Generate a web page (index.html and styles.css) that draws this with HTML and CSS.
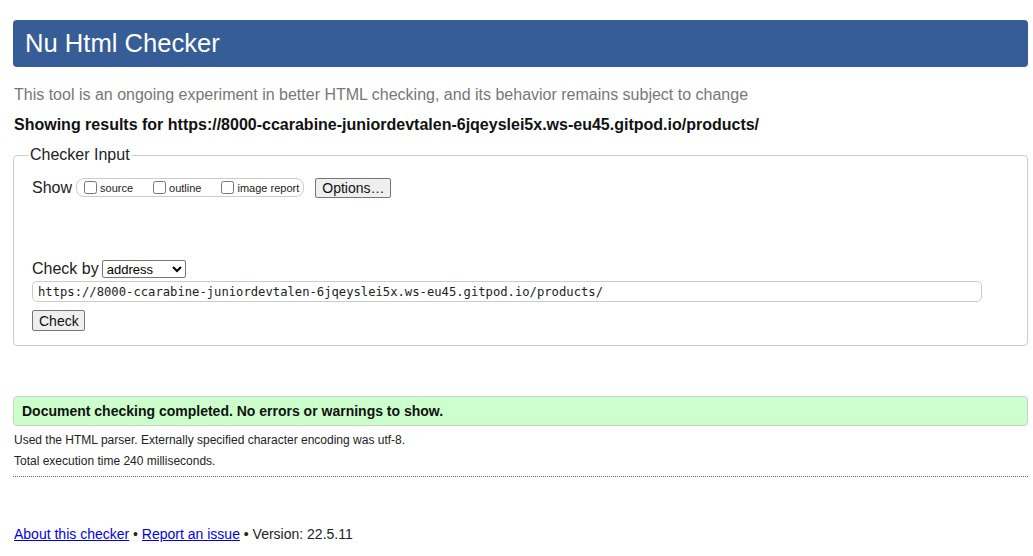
FILE: index.html
```html
<!DOCTYPE html>
<html lang="en">
<head>
<meta charset="utf-8">
<title>Nu Html Checker</title>
<link rel="stylesheet" href="styles.css">
</head>
<body>
<h1 class="title">Nu Html Checker</h1>
<p class="intro">This tool is an ongoing experiment in better HTML checking, and its behavior remains subject to change</p>
<p class="results-for">Showing results for https://8000-ccarabine-juniordevtalen-6jqeyslei5x.ws-eu45.gitpod.io/products/</p>
<form class="checker-form">
  <fieldset class="checker-input">
    <legend class="legend">Checker Input</legend>
    <div class="show-row">
      <span class="row-label">Show</span>
      <span class="opts-group">
        <label class="opt"><input type="checkbox" class="cb">source</label>
        <label class="opt"><input type="checkbox" class="cb">outline</label>
        <label class="opt"><input type="checkbox" class="cb">image report</label>
      </span>
      <button type="button" class="btn btn-options">Options…</button>
    </div>
    <div class="checkby-row">
      <span class="row-label">Check by</span>
      <select class="sel"><option>address</option></select>
    </div>
    <div class="url-row">
      <input class="url" type="text" value="https://8000-ccarabine-juniordevtalen-6jqeyslei5x.ws-eu45.gitpod.io/products/">
    </div>
    <div class="submit-row">
      <button type="button" class="btn btn-check">Check</button>
    </div>
  </fieldset>
</form>
<p class="success">Document checking completed. No errors or warnings to show.</p>
<p class="details">Used the HTML parser. Externally specified character encoding was utf-8.</p>
<p class="details">Total execution time 240 milliseconds.</p>
<hr class="sep">
<p class="footer"><a href="#" class="flink">About this checker</a> • <a href="#" class="flink">Report an issue</a> • Version: 22.5.11</p>
</body>
</html>
```
FILE: styles.css
```css
html { background: #fff; }
body {
  margin: 0;
  padding: 20px 5px 0 13px;
  font-family: "Liberation Sans", Arial, sans-serif;
  color: #222;
}
.title {
  margin: 0;
  height: 47px;
  box-sizing: border-box;
  padding: 7px 12px 0;
  background: #365d95;
  color: #fff;
  font-weight: normal;
  font-size: 25.6px;
  line-height: 32px;
  border-radius: 4px;
}
.intro {
  margin: 18px 0 0 1px;
  color: #777;
  font-size: 16px;
  line-height: 19px;
}
.results-for {
  margin: 11px 0 0 1px;
  font-weight: bold;
  font-size: 16px;
  line-height: 19px;
  color: #111;
}
.checker-form { margin: 0; }
.checker-input {
  margin: 12px 0 0 0;
  padding: 13px 18px 14px 18px;
  border: 1px solid #ccc;
  border-radius: 4px;
  min-inline-size: 0;
}
.legend {
  padding: 0 2px;
  margin-left: -4px;
  font-size: 16px;
  color: #222;
}
.show-row {
  display: flex;
  align-items: center;
  height: 21px;
}
.row-label {
  font-size: 16px;
  line-height: 20px;
}
.opts-group {
  display: inline-flex;
  align-items: center;
  margin-left: 4px;
  height: 17px;
  padding: 0 4px 0 6px;
  border: 1px solid #ccc;
  border-radius: 8px;
}
.opt {
  display: inline-flex;
  align-items: center;
  font-size: 11px;
  margin-right: 19px;
}
.opt:last-child { margin-right: 0; }
.cb {
  margin: 0 3px 0 1px;
  width: 13px;
  height: 13px;
}
.btn {
  font-family: "Liberation Sans", Arial, sans-serif;
  font-size: 14px;
  color: #111;
  background: #efefef;
  border: 1px solid #767676;
  border-radius: 2px;
  padding: 1px 6px;
  line-height: 16px;
}
.btn-options {
  margin-left: 11px;
  width: 76px;
  height: 20px;
}
.checkby-row {
  display: flex;
  align-items: center;
  margin-top: 61px;
  height: 20px;
}
.sel {
  margin-left: 3px;
  width: 84px;
  height: 18px;
  font-family: "Liberation Sans", Arial, sans-serif;
  font-size: 13px;
  border: 1px solid #767676;
  border-radius: 2px;
  background: #fff;
  color: #000;
  padding: 0;
}
.url-row { margin-top: 2px; }
.url {
  box-sizing: border-box;
  width: 950px;
  height: 21px;
  border: 1px solid #ccc;
  border-radius: 5px;
  padding: 0 5px;
  font-family: "DejaVu Sans Mono", "Liberation Mono", monospace;
  font-size: 12.2px;
  color: #222;
}
.submit-row { margin-top: 8px; }
.btn-check {
  width: 53px;
  height: 21px;
}
.success {
  margin: 50px 0 0 0;
  height: 30px;
  box-sizing: border-box;
  padding: 6px 8px;
  background: #ccffcc;
  border: 1px solid #c8d4c8;
  border-radius: 4px;
  font-weight: bold;
  font-size: 14px;
  line-height: 17px;
  color: #111;
}
.details {
  margin: 6px 0 0 1px;
  font-size: 12px;
  line-height: 15px;
  color: #222;
}
.success + .details { margin-top: 7px; }
.sep {
  margin: 7px 0 0 0;
  border: 0;
  border-top: 1px dotted #666;
  height: 0;
}
.footer {
  margin: 49px 0 0 1px;
  font-size: 14px;
  line-height: 17px;
  color: #222;
}
.flink { color: #0000ee; }
```
